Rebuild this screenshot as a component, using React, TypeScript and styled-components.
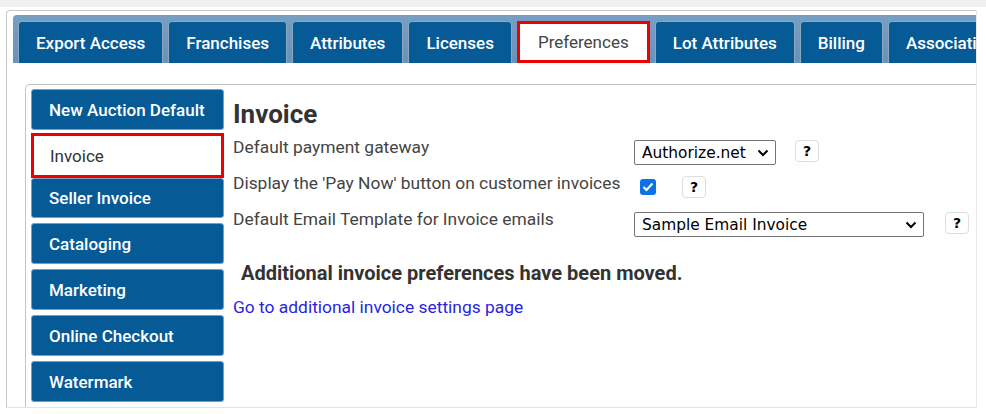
import React from "react";
import styled, { createGlobalStyle } from "styled-components";

const GlobalStyle = createGlobalStyle`
  html, body {
    margin: 0;
    padding: 0;
    background: #ffffff;
    font-family: Roboto, "Liberation Sans", Arial, sans-serif;
  }
  * {
    box-sizing: border-box;
  }
`;

const TopStrip = styled.div`
  height: 7px;
  background: #f1f1f1;
`;

const Frame = styled.div`
  margin: 3px 0 0 6px;
  width: 971px;
  height: 398px;
  border: 1px solid #c9c9c9;
  border-right-color: #e8e8e8;
  border-bottom-color: #e4e4e4;
  border-radius: 4px 0 0 0;
  padding: 4px 0 0 6px;
  display: flex;
  flex-direction: column;
  overflow: hidden;
`;

const TabBar = styled.ul`
  list-style: none;
  margin: 0;
  height: 48px;
  padding: 6px 0 0 5px;
  display: flex;
  align-items: flex-end;
  gap: 5px;
  background: linear-gradient(#779fc2, #6a93b8);
  border-radius: 4px 0 0 0;
  overflow: hidden;
  flex-shrink: 0;
`;

const Tab = styled.li<{ $active?: boolean }>`
  flex-shrink: 0;
  height: 42px;
  display: flex;
  align-items: center;
  padding: 0 ${({ $active }) => ($active ? "18px" : "17px")};
  border: ${({ $active }) => ($active ? "3px solid #ee0000" : "1px solid #8ba7c1")};
  border-bottom: ${({ $active }) => ($active ? "3px solid #ee0000" : "none")};
  border-radius: ${({ $active }) => ($active ? "0" : "4px 4px 0 0")};
  background: ${({ $active }) => ($active ? "#ffffff" : "#065a96")};
  color: ${({ $active }) => ($active ? "#444444" : "#ffffff")};
  font-size: 17px;
  font-weight: ${({ $active }) => ($active ? 400 : 500)};
  white-space: nowrap;
`;

const Panel = styled.div`
  flex: 1;
  margin: 21px 0 0 12px;
  border-top: 1px solid #c4c4c4;
  border-left: 1px solid #c4c4c4;
  border-radius: 5px 0 0 0;
  padding: 4px 0 0 5px;
  display: flex;
  gap: 9px;
`;

const SideNav = styled.ul`
  list-style: none;
  margin: 0;
  padding: 0;
  width: 193px;
  flex-shrink: 0;
  display: flex;
  flex-direction: column;
  gap: 5px;
`;

const SideItem = styled.li<{ $active?: boolean; $after?: boolean }>`
  height: ${({ $active, $after }) => ($active ? "45px" : $after ? "40px" : "41px")};
  margin-top: ${({ $active, $after }) => ($active ? "-2px" : $after ? "-5px" : "0")};
  display: flex;
  align-items: center;
  padding-left: ${({ $active }) => ($active ? "16px" : "17px")};
  background: ${({ $active }) => ($active ? "#ffffff" : "#065a96")};
  border: ${({ $active }) => ($active ? "3px solid #ee0000" : "1px solid #7f9dba")};
  border-radius: ${({ $active }) => ($active ? "0" : "3px")};
  color: ${({ $active }) => ($active ? "#333333" : "#ffffff")};
  font-size: 17px;
  font-weight: ${({ $active }) => ($active ? 400 : 500)};
  white-space: nowrap;
`;

const Content = styled.div`
  flex: 1;
  padding-top: 10px;
  color: #444444;
`;

const Heading = styled.h2`
  margin: 0 0 8px;
  font-size: 26px;
  line-height: 30px;
  font-weight: 700;
  color: #333333;
`;

const Row = styled.div`
  display: flex;
  align-items: flex-start;
  height: 36px;
`;

const Label = styled.div`
  width: 401px;
  font-size: 17.4px;
  line-height: 20px;
  color: #444444;
  white-space: nowrap;
`;

const SelectBox = styled.div<{ $width: number }>`
  width: ${({ $width }) => $width}px;
  height: 25px;
  margin-top: 3px;
  border: 1px solid #767676;
  border-radius: 2px;
  padding: 0 6px 0 7px;
  display: flex;
  align-items: center;
  justify-content: space-between;
  font-family: "DejaVu Sans", Verdana, sans-serif;
  font-size: 15.4px;
  color: #000000;
  background: #ffffff;
  white-space: nowrap;
`;

const HelpButton = styled.span<{ $gap: number }>`
  margin: 3px 0 0 ${({ $gap }) => $gap}px;
  width: 24px;
  height: 22px;
  border: 1px solid #dddddd;
  border-radius: 4px;
  display: flex;
  align-items: center;
  justify-content: center;
  font-family: "DejaVu Sans", Verdana, sans-serif;
  font-size: 14px;
  font-weight: 700;
  color: #000000;
  background: #ffffff;
`;

const CheckBox = styled.span`
  margin: 6px 0 0 6px;
  width: 16px;
  height: 16px;
  border-radius: 3px;
  background: #0b72ea;
  display: flex;
  align-items: center;
  justify-content: center;
`;

const Notice = styled.h3`
  margin: 16px 0 12px 8px;
  font-size: 20px;
  line-height: 24px;
  font-weight: 700;
  color: #333333;
`;

const SettingsLink = styled.a`
  font-size: 17.4px;
  line-height: 20px;
  color: #2a1fe0;
  text-decoration: none;
`;

const Chevron = () => (
  <svg width="12" height="8" viewBox="0 0 12 8">
    <path d="M1.5 1.5 L6 6 L10.5 1.5" fill="none" stroke="#000" strokeWidth="2" />
  </svg>
);

const tabs = [
  "Export Access",
  "Franchises",
  "Attributes",
  "Licenses",
  "Preferences",
  "Lot Attributes",
  "Billing",
  "Associations",
];

const sideItems = [
  "New Auction Default",
  "Invoice",
  "Seller Invoice",
  "Cataloging",
  "Marketing",
  "Online Checkout",
  "Watermark",
];

export default function App() {
  return (
    <>
      <GlobalStyle />
      <TopStrip />
      <Frame>
        <TabBar>
          {tabs.map((t) => (
            <Tab key={t} $active={t === "Preferences"}>
              {t}
            </Tab>
          ))}
        </TabBar>
        <Panel>
          <SideNav>
            {sideItems.map((s) => (
              <SideItem key={s} $active={s === "Invoice"} $after={s === "Seller Invoice"}>
                {s}
              </SideItem>
            ))}
          </SideNav>
          <Content>
            <Heading>Invoice</Heading>
            <Row>
              <Label>Default payment gateway</Label>
              <SelectBox $width={142}>
                Authorize.net
                <Chevron />
              </SelectBox>
              <HelpButton $gap={19}>?</HelpButton>
            </Row>
            <Row>
              <Label>Display the 'Pay Now' button on customer invoices</Label>
              <CheckBox>
                <svg width="12" height="10" viewBox="0 0 12 10">
                  <path d="M1.5 5 L4.5 8 L10.5 1.5" fill="none" stroke="#fff" strokeWidth="2" />
                </svg>
              </CheckBox>
              <HelpButton $gap={26}>?</HelpButton>
            </Row>
            <Row>
              <Label>Default Email Template for Invoice emails</Label>
              <SelectBox $width={290}>
                Sample Email Invoice
                <Chevron />
              </SelectBox>
              <HelpButton $gap={21}>?</HelpButton>
            </Row>
            <Notice>Additional invoice preferences have been moved.</Notice>
            <SettingsLink href="#">Go to additional invoice settings page</SettingsLink>
          </Content>
        </Panel>
      </Frame>
    </>
  );
}
